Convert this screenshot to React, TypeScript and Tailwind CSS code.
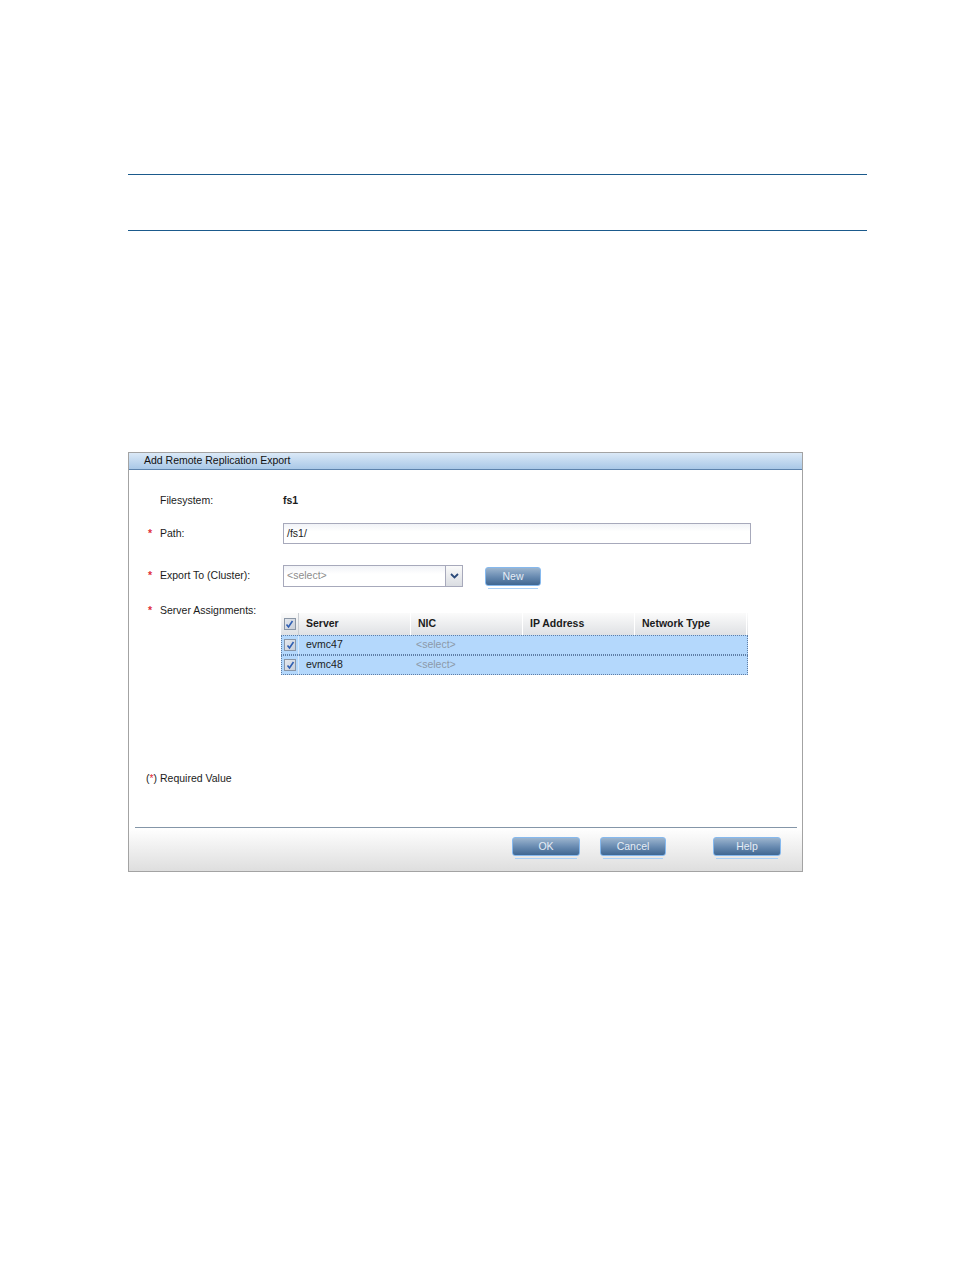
import React from "react";

const font = { fontFamily: '"Liberation Sans", Arial, sans-serif' };

function Check() {
  return (
    <span className="flex h-[12px] w-[12px] items-center justify-center border border-[#8a96a6] bg-gradient-to-br from-[#e4e8ee] to-[#c8ced8]">
      <svg width="9" height="9" viewBox="0 0 9 9">
        <path d="M1.5 4.5 L3.5 7 L7.5 1" fill="none" stroke="#2f5fb3" strokeWidth="1.6" />
      </svg>
    </span>
  );
}

function BlueButton({ label, w }: { label: string; w: string }) {
  return (
    <div className="flex flex-col">
      <button
        className={`${w} h-[19px] rounded-[3px] border border-[#86b9ee] bg-gradient-to-b from-[#9cb5ce] via-[#6a8cb2] to-[#3f6792] text-[10.5px] leading-none text-[#e6edf5]`}
      >
        {label}
      </button>
      <div className="mx-[3px] mt-[2px] h-px bg-[#a9d0f7]" />
    </div>
  );
}

const cols = ["Server", "NIC", "IP Address", "Network Type"];
const rows = ["evmc47", "evmc48"];

export default function App() {
  return (
    <div className="min-h-[1270px] bg-white text-[10.5px] text-[#1b1b1b]" style={font}>
      {/* Rules */}
      <div className="pt-[174px]">
        <div className="ml-[128px] w-[739px] border-t border-[#1b5a8c]" />
        <div className="ml-[128px] mt-[55px] w-[739px] border-t border-[#1b5a8c]" />
      </div>

      {/* Dialog */}
      <div className="ml-[128px] mt-[221px] flex h-[420px] w-[675px] flex-col border border-[#a3a3a3]">
        <div className="flex h-[17px] items-center border-b border-[#5d83ac] bg-gradient-to-b from-[#dbe9f7] to-[#a9c8e7] pl-[15px] text-[10.5px] text-[#111]">
          Add Remote Replication Export
        </div>

        <div className="flex flex-col pl-[19px]">
          <div className="mt-[21px] flex h-[20px] items-center">
            <span className="w-[12px]" />
            <span className="w-[123px]">Filesystem:</span>
            <span className="font-bold">fs1</span>
          </div>

          <div className="mt-[12px] flex h-[21px] items-center">
            <span className="w-[12px] font-bold text-[#e0303a]">*</span>
            <span className="w-[123px]">Path:</span>
            <div className="flex h-[21px] w-[468px] items-center border border-[#a7a9bb] bg-gradient-to-b from-[#f1f3f7] to-white to-40% pl-[3px]">
              /fs1/
            </div>
          </div>

          <div className="mt-[21px] flex h-[22px] items-center">
            <span className="w-[12px] font-bold text-[#e0303a]">*</span>
            <span className="w-[123px]">Export To (Cluster):</span>
            <div className="flex h-[22px] w-[163px] items-center border border-[#a7a9bb] bg-gradient-to-b from-[#f1f3f7] to-white to-40% pl-[3px] text-[#8d8d8d]">
              &lt;select&gt;
            </div>
            <div className="flex h-[22px] w-[17px] items-center justify-center border border-l-0 border-[#a7a9bb] bg-gradient-to-b from-[#fafafa] to-[#dadde2]">
              <svg width="9" height="6" viewBox="0 0 9 6">
                <path d="M1 1 L4.5 4.5 L8 1" fill="none" stroke="#2b4a7a" strokeWidth="1.8" />
              </svg>
            </div>
            <div className="ml-[22px] mt-[3px]">
              <BlueButton label="New" w="w-[56px]" />
            </div>
          </div>

          <div className="mt-[16px] flex items-start">
            <span className="w-[12px] font-bold text-[#e0303a]">*</span>
            <span className="w-[121px]">Server Assignments:</span>
            <div className="mt-[10px] flex w-[467px] flex-col">
              <div className="flex h-[22px] bg-gradient-to-b from-[#fbfbfb] to-[#dfe1e4] font-bold">
                <div className="flex w-[18px] items-center justify-center border-r border-[#c9cdd2]">
                  <Check />
                </div>
                {cols.map((c) => (
                  <div key={c} className="flex w-[112px] items-center border-r border-[#ffffff] pl-[7px]">
                    {c}
                  </div>
                ))}
              </div>
              {rows.map((r) => (
                <div
                  key={r}
                  className="flex h-[20px] border border-dotted border-[#5f7ea6] bg-[#b4d8fc]"
                >
                  <div className="flex w-[17px] items-center justify-center border-r border-[#d8e8f8]">
                    <Check />
                  </div>
                  <div className="flex w-[111px] items-center pl-[7px]">{r}</div>
                  <div className="flex w-[112px] items-center pl-[6px] text-[#8c98a8]">&lt;select&gt;</div>
                </div>
              ))}
            </div>
          </div>

          <div className="ml-[-2px] mt-[97px] flex h-[14px] items-center">
            (<span className="text-[#e0303a]">*</span>) Required Value
          </div>
        </div>

        <div className="flex-1" />

        <div className="ml-[6px] mr-[5px] border-t border-[#8496a8]" />
        <div className="flex h-[43px] items-start bg-gradient-to-b from-white to-[#dedede] pt-[9px]">
          <div className="ml-[383px]">
            <BlueButton label="OK" w="w-[68px]" />
          </div>
          <div className="ml-[20px]">
            <BlueButton label="Cancel" w="w-[66px]" />
          </div>
          <div className="ml-[47px]">
            <BlueButton label="Help" w="w-[68px]" />
          </div>
        </div>
      </div>
    </div>
  );
}
